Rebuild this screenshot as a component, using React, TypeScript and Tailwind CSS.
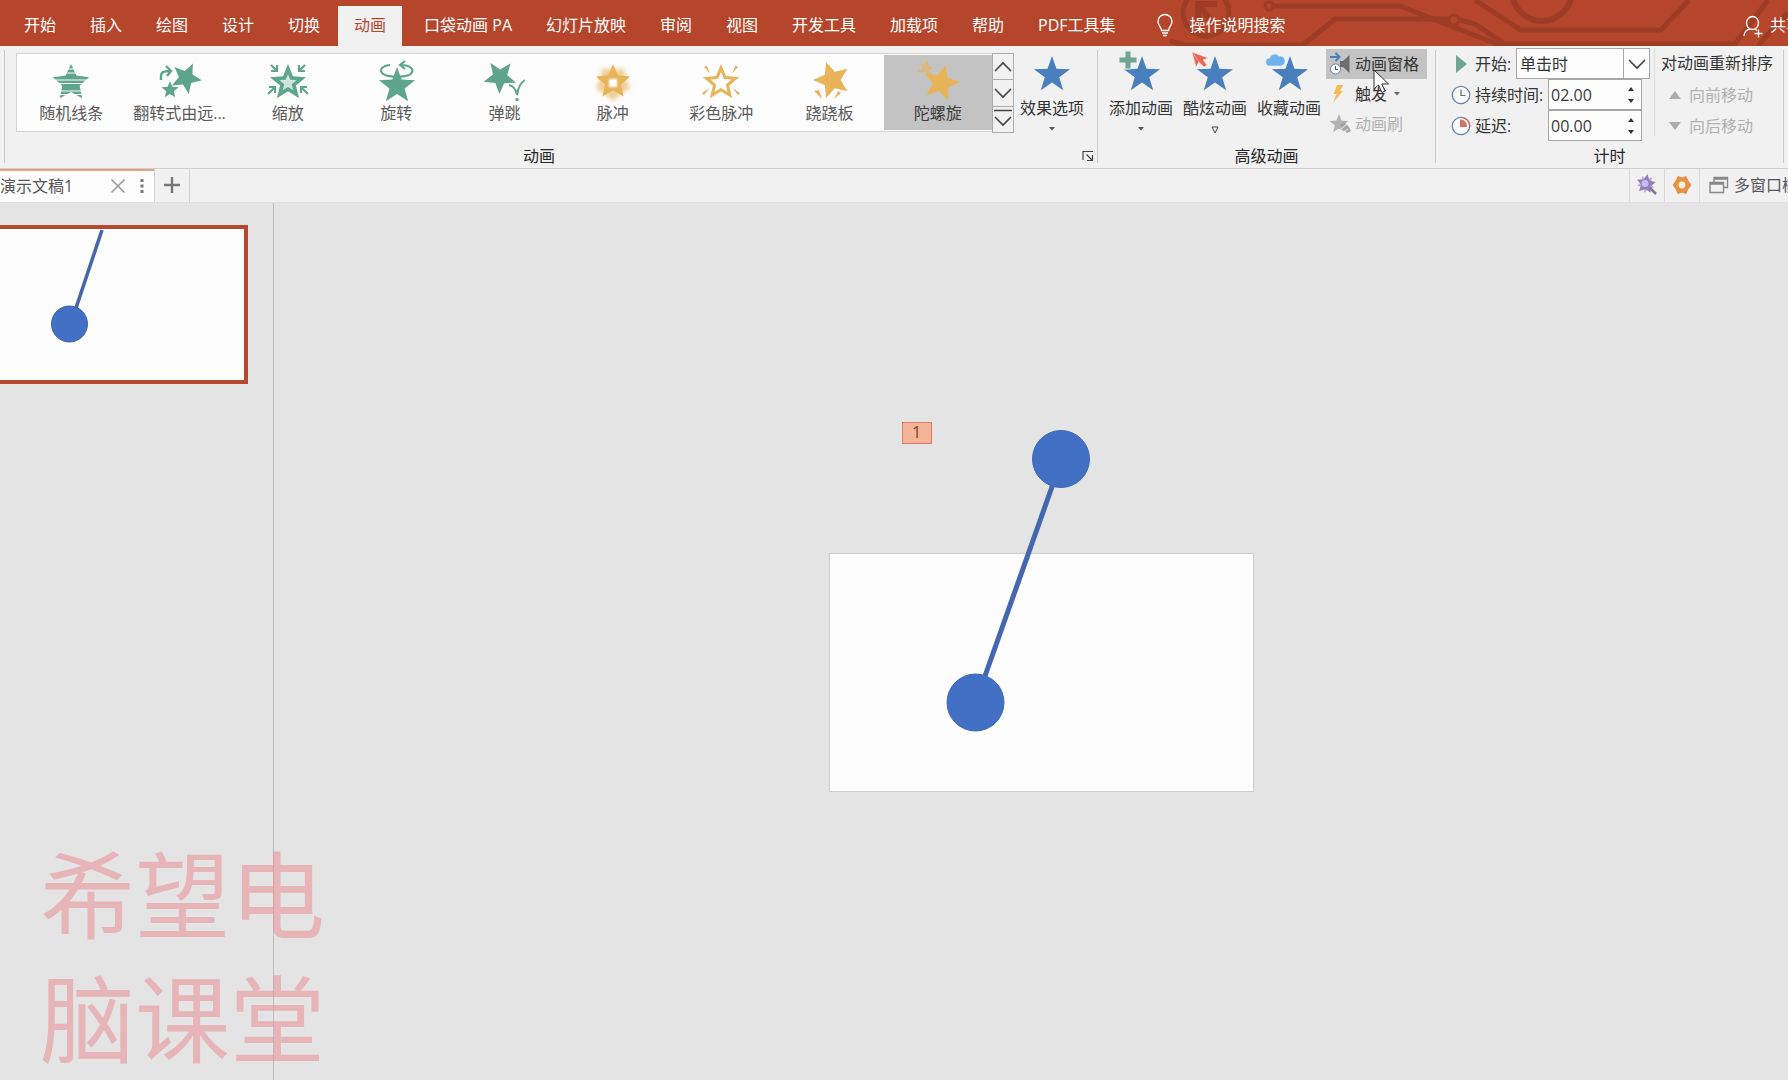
import type { ReactNode } from "react";

const GREEN = "#5fa58e";
const GOLD = "#e8b45a";
const BLUE = "#4a7fbd";

function starPoints(cx: number, cy: number, r: number, rot = 0, ratio = 0.4) {
  return Array.from({ length: 10 }, (_, i) => {
    const a = ((i * 36 + rot - 90) * Math.PI) / 180;
    const d = i % 2 === 0 ? r : r * ratio;
    return `${(cx + d * Math.cos(a)).toFixed(2)},${(cy + d * Math.sin(a)).toFixed(2)}`;
  }).join(" ");
}

function Star({ cx, cy, r, rot, ratio, fill, opacity }: { cx: number; cy: number; r: number; rot?: number; ratio?: number; fill: string; opacity?: number }) {
  return <polygon points={starPoints(cx, cy, r, rot, ratio)} fill={fill} opacity={opacity} />;
}

function Icon48({ children }: { children: ReactNode }) {
  return (
    <svg viewBox="0 0 48 44" className="h-11 w-12 shrink-0 overflow-visible" aria-hidden="true">
      {children}
    </svg>
  );
}

const effects: { name: string; icon: ReactNode; selected?: boolean }[] = [
  {
    name: "随机线条",
    icon: (
      <Icon48>
        <Star cx={24} cy={24} r={19} ratio={0.48} fill={GREEN} />
        <path d="M16 10H32M14 14H34M4 21H44M4 24.500H44M10 32H38M8 35.500H40" stroke="#fdfdfd" strokeWidth="1" />
      </Icon48>
    ),
  },
  {
    name: "翻转式由远...",
    icon: (
      <Icon48>
        <Star cx={31} cy={19} r={16} rot={26} ratio={0.45} fill={GREEN} />
        <Star cx={15} cy={31} r={10} fill="#fdfdfd" />
        <Star cx={15} cy={31} r={9} fill={GREEN} ratio={0.44} />
        <path d="M6 21V17C6 13 9 12 15 12M11 7L16 12L12 17" fill="none" stroke={GREEN} strokeWidth="2.4" />
      </Icon48>
    ),
  },
  {
    name: "缩放",
    icon: (
      <Icon48>
        <Star cx={24} cy={24} r={19} ratio={0.44} fill={GREEN} />
        <Star cx={24} cy={24} r={9} ratio={0.44} fill="#cfe5dd" />
        <path
          d="M7 6L13 12M13 6V12H7M41 6L35 12M35 6V12H41M4 35L11 28M5 28H11V34M44 35L37 28M43 28H37V34"
          fill="none"
          stroke={GREEN}
          strokeWidth="2.2"
        />
      </Icon48>
    ),
  },
  {
    name: "旋转",
    icon: (
      <Icon48>
        <path d="M18 6C9 7 6 12 12 15.500M38 15.500C44 11 38 6 29 6M33 2L28 6L33 10" fill="none" stroke={GREEN} strokeWidth="2.2" />
        <Star cx={25} cy={27} r={19} ratio={0.42} fill={GREEN} />
        <path d="M12 15.500C18 18.500 32 18.500 38 15.500" fill="none" stroke={GREEN} strokeWidth="2.2" />
      </Icon48>
    ),
  },
  {
    name: "弹跳",
    icon: (
      <Icon48>
        <Star cx={20} cy={18} r={17} rot={38} ratio={0.44} fill={GREEN} />
        <path d="M29 26C34 27 36 31 37 36C38 29 40 24 45 21" fill="none" stroke="#fdfdfd" strokeWidth="4" />
        <path d="M29 26C34 27 36 31 37 36C38 29 40 24 45 21" fill="none" stroke={GREEN} strokeWidth="2" />
        <circle cx="37" cy="40.500" r="1.700" fill={GREEN} />
      </Icon48>
    ),
  },
  {
    name: "脉冲",
    icon: (
      <Icon48>
        <defs>
          <filter id="pulse-glow" x="-30%" y="-30%" width="160%" height="160%">
            <feGaussianBlur stdDeviation="2" />
          </filter>
          <filter id="pulse-core" x="-60%" y="-60%" width="220%" height="220%">
            <feGaussianBlur stdDeviation="1" />
          </filter>
        </defs>
        <g filter="url(#pulse-glow)">
          <Star cx={24} cy={24} r={18} rot={36} ratio={0.75} fill={GOLD} opacity={0.65} />
        </g>
        <Star cx={24} cy={23} r={18} ratio={0.46} fill={GOLD} />
        <rect x="20" y="20" width="8" height="8" fill="#ffffff" filter="url(#pulse-core)" />
        <rect x="21" y="21" width="6" height="6" fill="#ffffff" />
      </Icon48>
    ),
  },
  {
    name: "彩色脉冲",
    icon: (
      <Icon48>
        <Star cx={24} cy={24} r={19} ratio={0.45} fill={GOLD} />
        <Star cx={24} cy={24} r={11} ratio={0.46} fill="#fdfdfd" />
        <path d="M7 8L9.500 6.500L13 14.500ZM41 8L38.500 6.500L35 14.500ZM5 34L7 36L12.500 29ZM43 34L41 36L35.500 29Z" fill={GOLD} />
      </Icon48>
    ),
  },
  {
    name: "跷跷板",
    icon: (
      <Icon48>
        <Star cx={27} cy={21} r={19} rot={-18} ratio={0.46} fill={GOLD} />
        <path d="M9 32L17 40L14 31ZM29 40L33 32L36 34Z" fill={GOLD} />
      </Icon48>
    ),
  },
  {
    name: "陀螺旋",
    selected: true,
    icon: (
      <Icon48>
        <Star cx={27} cy={24} r={19} rot={14} ratio={0.44} fill={GOLD} />
        <Star cx={12} cy={9} r={7} rot={14} ratio={0.5} fill={GOLD} opacity={0.6} />
        <path d="M11 2L14 6M18 8L15 10M4 13L8 11M15 13L17 17" stroke={GOLD} strokeWidth="2.4" opacity="0.7" />
      </Icon48>
    ),
  },
];

const tabs = ["开始", "插入", "绘图", "设计", "切换", "动画", "口袋动画 PA", "幻灯片放映", "审阅", "视图", "开发工具", "加载项", "帮助", "PDF工具集"];

function Chevron({ up, bar }: { up?: boolean; bar?: boolean }) {
  return (
    <svg viewBox="0 0 20 22" className="h-[22px] w-5" aria-hidden="true">
      {bar && <path d="M1 2.500H19" stroke="#444" strokeWidth="1.500" />}
      <path d={up ? "M2 15L10 7L18 15" : bar ? "M2 9L10 17L18 9" : "M2 7L10 15L18 7"} fill="none" stroke="#444" strokeWidth="1.600" />
    </svg>
  );
}

function Separator() {
  return <div className="mt-1 mb-[5px] w-px shrink-0 bg-[#cbcbcb]" />;
}

function GroupLabel({ children }: { children: ReactNode }) {
  return <div className="pb-[2px] text-center leading-5 text-[#262626]">{children}</div>;
}

function BigButton({ label, icon, arrow }: { label: string; icon: ReactNode; arrow?: "solid" | "open" }) {
  return (
    <button type="button" className="flex w-[74px] flex-col items-center text-[#333]">
      <svg viewBox="0 0 48 47" className="h-[47px] w-12 shrink-0 overflow-visible" aria-hidden="true">
        {icon}
      </svg>
      <span className="leading-5 whitespace-nowrap">{label}</span>
      {arrow === "solid" && (
        <svg viewBox="0 0 8 6" className="mt-2 h-[6px] w-2" aria-hidden="true">
          <path d="M1 1H7L4 4.500Z" fill="#555" />
        </svg>
      )}
      {arrow === "open" && (
        <svg viewBox="0 0 8 8" className="mt-2 h-2 w-2" aria-hidden="true">
          <path d="M1 1H7L4 7Z" fill="none" stroke="#444" />
        </svg>
      )}
    </button>
  );
}

function Clock({ pie }: { pie?: boolean }) {
  return (
    <svg viewBox="0 0 20 20" className="h-5 w-5 shrink-0" aria-hidden="true">
      <circle cx="10" cy="10" r="8.700" fill="#fdfdfd" stroke="#5f84b4" strokeWidth="1.300" />
      {pie ? (
        <>
          <path d="M10 1.300A8.700 8.700 0 0 1 18.700 10" fill="none" stroke="#d5695a" strokeWidth="1.300" />
          <path d="M9 3.500H10A6.500 6.500 0 0 1 16 11H9Z" fill="#d9705f" />
        </>
      ) : (
        <path d="M10 4.500V10.500H14.500" fill="none" stroke="#666" strokeWidth="1.200" />
      )}
    </svg>
  );
}

function Spin({ id, label, value, pie }: { id: string; label: string; value: string; pie?: boolean }) {
  return (
    <div className="flex h-[31px] items-center">
      <Clock pie={pie} />
      <label htmlFor={id} className="ml-1 w-[73px] whitespace-nowrap">
        {label}
      </label>
      <div className="flex h-[31px] w-[94px] items-center border border-[#a6a6a6] bg-[#fdfdfd]">
        <input id={id} defaultValue={value} className="h-full w-0 grow bg-transparent pl-[2px] text-[#3a3a3a] outline-none" />
        <div className="flex w-5 flex-col items-center gap-[6px]">
          <button type="button" aria-label={label + " 增加"}>
            <svg viewBox="0 0 8 6" className="h-[6px] w-2">
              <path d="M1 5H7L4 1Z" fill="#333" />
            </svg>
          </button>
          <button type="button" aria-label={label + " 减少"}>
            <svg viewBox="0 0 8 6" className="h-[6px] w-2">
              <path d="M1 1H7L4 5Z" fill="#333" />
            </svg>
          </button>
        </div>
      </div>
    </div>
  );
}

function TitleBar() {
  return (
    <header className="relative flex h-[46px] shrink-0 items-end overflow-hidden bg-[#b5462c] text-white">
      <svg viewBox="0 0 618 46" className="absolute top-0 right-0 h-[46px] w-[618px]" aria-hidden="true">
        <g fill="none" stroke="#993c26" strokeWidth="5" opacity="0.85">
          <circle cx="36" cy="13" r="23" />
          <path d="M47 4H28V26M28 4L44 24" strokeWidth="6" />
          <circle cx="99" cy="6" r="4" strokeWidth="3" />
          <path d="M104 6H230L332 46" />
          <path d="M0 41L14 45H133L165 19H278" />
          <circle cx="284" cy="20" r="5" strokeWidth="3" />
          <path d="M290 20L305 24L335 44H565L598 0" />
          <path d="M305 0L351 30H491L519 0" />
          <circle cx="372" cy="-9" r="30" strokeWidth="6" />
          <path d="M588 46L618 12" />
        </g>
      </svg>
      <nav className="relative flex gap-[2px] pl-2">
        {tabs.map((t) => (
          <button
            key={t}
            type="button"
            className={
              t === "动画"
                ? "mr-1 h-10 bg-[#f1f1f1] px-4 pb-[2px] whitespace-nowrap text-[#b5462c]"
                : "h-10 px-4 pb-[2px] whitespace-nowrap"
            }
          >
            {t}
          </button>
        ))}
      </nav>
      <button type="button" className="relative ml-6 flex h-10 items-center gap-4 pb-[2px] whitespace-nowrap">
        <svg viewBox="0 0 18 24" className="h-6 w-[18px]" fill="none" stroke="#fff" strokeWidth="1.400" aria-hidden="true">
          <path d="M5.500 17.500C5.500 14 2 12.500 2 8.500A7 7 0 0 1 16 8.500C16 12.500 12.500 14 12.500 17.500ZM6 20H12M7 22.500H11" />
        </svg>
        操作说明搜索
      </button>
      <button type="button" className="relative ml-auto flex h-10 w-[46px] items-center gap-[6px] overflow-hidden pb-[2px] whitespace-nowrap">
        <svg viewBox="0 0 22 24" className="mt-1 h-6 w-[22px] shrink-0" fill="none" stroke="#fff" strokeWidth="1.300" aria-hidden="true">
          <ellipse cx="10.500" cy="8" rx="6" ry="6.500" />
          <path d="M2 21C2 17 5 14.500 8 14M13 14L15 15.500M16.500 14.500V22.500M12.500 18.500H20.500" />
        </svg>
        <span>共享</span>
      </button>
    </header>
  );
}

function AnimationGroup() {
  return (
    <section className="flex min-w-0 grow flex-col">
      <div className="relative flex h-[100px] pt-[7px] pl-[11px]">
        <div className="grid h-[79px] min-w-0 grow grid-cols-9 border border-r-0 border-[#d2d2d2] bg-[#fdfdfd] py-px">
          {effects.map((e) => (
            <button
              key={e.name}
              type="button"
              className={
                e.selected
                  ? "flex min-w-0 flex-col items-center bg-[#c3c3c3] pt-1 text-[#3c3c3c]"
                  : "flex min-w-0 flex-col items-center pt-1 text-[#5a5a5a]"
              }
            >
              {e.icon}
              <span className="leading-5 whitespace-nowrap">{e.name}</span>
            </button>
          ))}
        </div>
        <div className="flex h-[80px] w-[22px] shrink-0 flex-col divide-y divide-[#ababab] border border-[#ababab]">
          <button type="button" aria-label="上一行" className="flex grow items-center justify-center">
            <Chevron up />
          </button>
          <button type="button" aria-label="下一行" className="flex grow items-center justify-center">
            <Chevron />
          </button>
          <button type="button" aria-label="更多" className="flex grow items-center justify-center">
            <Chevron bar />
          </button>
        </div>
        <div className="-mt-[2px] flex w-[83px] shrink-0 pl-px">
          <BigButton label="效果选项" arrow="solid" icon={<Star cx={24} cy={24} r={19} fill={BLUE} />} />
        </div>
        <button type="button" aria-label="动画设置" className="absolute right-[3px] -bottom-4">
          <svg viewBox="0 0 12 12" className="h-3 w-3" fill="none" stroke="#444" strokeWidth="1.200">
            <path d="M1 10V1.500H11M4.500 4.500L10 10M10.500 5V10.500H5" />
          </svg>
        </button>
      </div>
      <div className="pr-6">
        <GroupLabel>动画</GroupLabel>
      </div>
    </section>
  );
}

function AdvancedGroup() {
  return (
    <section className="flex shrink-0 flex-col">
      <div className="flex h-[100px] pr-2 pl-[6px]">
        <div className="flex pt-[5px]">
          <BigButton
            label="添加动画"
            arrow="solid"
            icon={
              <>
                <Star cx={25} cy={24} r={19} fill={BLUE} />
                <path d="M8 0H14V6H20V12H14V18H8V12H2V6H8Z" fill="#6fa592" stroke="#f1f1f1" />
              </>
            }
          />
          <BigButton
            label="酷炫动画"
            arrow="open"
            icon={
              <>
                <Star cx={24} cy={24} r={19} fill={BLUE} />
                <path d="M1 1L17 7L12 9L16 14L13 16L8 11L5 16Z" fill="#ee6352" stroke="#f1f1f1" strokeWidth="0.500" />
                <path d="M1 1L8 11" stroke="#f6b0a6" />
              </>
            }
          />
          <BigButton
            label="收藏动画"
            icon={
              <>
                <Star cx={25} cy={24} r={19} fill={BLUE} />
                <path d="M5 15A4 4 0 0 1 4.500 7A5.500 5.500 0 0 1 14 5A5 5 0 0 1 16 15Z" fill="#6db3ea" stroke="#f1f1f1" strokeWidth="0.600" />
              </>
            }
          />
        </div>
        <div className="flex flex-col pt-[3px]">
          <button type="button" className="relative flex h-[30px] items-center gap-1 bg-[#c3c3c3] pr-2 pl-[3px] whitespace-nowrap text-[#333]">
            <svg viewBox="0 0 22 24" className="h-6 w-[22px]" aria-hidden="true">
              <path d="M1 5H10M6.500 1L10.500 5L6.500 9" fill="none" stroke="#4a7fbd" strokeWidth="2" />
              <circle cx="6.500" cy="17" r="5" fill="#fff" stroke="#5f84b4" />
              <path d="M6.500 14V17.500H9" fill="none" stroke="#555" />
              <path d="M11 9H14L20.500 3V21L14 15H11Z" fill="#6d6d6d" />
            </svg>
            动画窗格
            <svg viewBox="0 0 18 26" className="absolute top-5 left-[47px] z-10 h-[26px] w-[18px]" aria-hidden="true">
              <path d="M1 1V20L5.500 16L9 23.500L12 22L8.700 15H15.500Z" fill="#fff" stroke="#333" />
            </svg>
          </button>
          <button type="button" className="flex h-[30px] items-center gap-1 pl-[3px] text-[#333]">
            <svg viewBox="0 0 22 24" className="h-6 w-[22px]" aria-hidden="true">
              <path d="M8 3H14L11 9H14L4 21L7.500 12H4.500Z" fill="#f0bd58" />
            </svg>
            触发
            <svg viewBox="0 0 8 6" className="ml-[2px] h-[6px] w-2" aria-hidden="true">
              <path d="M1 1H7L4 4.500Z" fill="#666" />
            </svg>
          </button>
          <button type="button" disabled className="flex h-[30px] items-center gap-1 pl-[3px] text-[#b0b0b0]">
            <svg viewBox="0 0 22 24" className="h-6 w-[22px]" aria-hidden="true">
              <Star cx={10} cy={12} r={10} ratio={0.44} fill="#b3b3b3" />
              <path d="M11 13L15 10L20 15L22 19L18 21L14 17Z" fill="#a3a3a3" />
              <path d="M12 17L18 12M15 20L19 17" stroke="#f1f1f1" />
            </svg>
            动画刷
          </button>
        </div>
      </div>
      <GroupLabel>高级动画</GroupLabel>
    </section>
  );
}

function TimingGroup() {
  return (
    <section className="flex shrink-0 flex-col">
      <div className="flex h-[100px] items-start pt-[2px] pr-[10px] pl-[15px] text-[#333]">
        <div className="flex flex-col">
          <div className="flex h-[31px] items-center">
            <svg viewBox="0 0 20 20" className="h-5 w-5" aria-hidden="true">
              <path d="M5 1V19L16 10Z" fill="#6fa592" />
            </svg>
            <label htmlFor="start" className="ml-1 w-[41px] whitespace-nowrap">
              开始:
            </label>
            <div className="relative h-[31px] w-[134px]">
              <select id="start" className="h-full w-full appearance-none border border-[#a6a6a6] bg-[#fdfdfd] pl-[3px] outline-none">
                <option>单击时</option>
              </select>
              <div className="pointer-events-none absolute inset-y-0 right-0 flex w-[27px] items-center justify-center border-l border-[#a6a6a6]">
                <Chevron />
              </div>
            </div>
          </div>
          <Spin id="duration" label="持续时间:" value="02.00" />
          <Spin id="delay" label="延迟:" value="00.00" pie />
        </div>
        <div className="ml-1 h-[88px] w-px self-start bg-[#dadada]" />
        <div className="ml-[6px] flex flex-col">
          <span className="h-[31px] leading-[31px] whitespace-nowrap">对动画重新排序</span>
          <button type="button" disabled className="flex h-[31px] items-center gap-2 pl-2 text-[#b0b0b0]">
            <svg viewBox="0 0 12 8" className="h-2 w-3" aria-hidden="true">
              <path d="M0 8H12L6 0Z" fill="#ababab" />
            </svg>
            向前移动
          </button>
          <button type="button" disabled className="flex h-[31px] items-center gap-2 pl-2 text-[#b0b0b0]">
            <svg viewBox="0 0 12 8" className="h-2 w-3" aria-hidden="true">
              <path d="M0 0H12L6 8Z" fill="#ababab" />
            </svg>
            向后移动
          </button>
        </div>
      </div>
      <GroupLabel>计时</GroupLabel>
    </section>
  );
}

function DocumentBar() {
  return (
    <div className="flex h-[34px] shrink-0 border-b border-[#e0e0e0] bg-[#f1f1f1] text-[#555]">
      <div className="flex w-[154px] items-center border-t-2 border-[#e5a283] bg-[#fdfdfd] pb-[2px]">
        <span className="grow leading-6 whitespace-nowrap">演示文稿1</span>
        <button type="button" aria-label="关闭">
          <svg viewBox="0 0 16 16" className="h-4 w-4" stroke="#999" strokeWidth="1.600">
            <path d="M1.500 1.500L14.500 14.500M14.500 1.500L1.500 14.500" />
          </svg>
        </button>
        <button type="button" aria-label="菜单" className="mr-[10px] ml-[14px]">
          <svg viewBox="0 0 4 16" className="h-4 w-1" fill="#777">
            <path d="M0.500 1H3.500V4H0.500ZM0.500 6.500H3.500V9.500H0.500ZM0.500 12H3.500V15H0.500Z" />
          </svg>
        </button>
      </div>
      <button type="button" aria-label="新建" className="flex w-9 items-center justify-center border-x border-[#d2d2d2] pb-[2px]">
        <svg viewBox="0 0 16 16" className="h-4 w-4" stroke="#777" strokeWidth="2.400">
          <path d="M8 0V16M0 8H16" />
        </svg>
      </button>
      <div className="ml-auto flex">
        <button type="button" aria-label="魔法棒" className="flex w-[35px] items-center justify-center border-l border-[#d8d8d8] pb-[2px]">
          <svg viewBox="0 0 22 22" className="h-[22px] w-[22px]">
            <path d="M13 13L20 20" stroke="#7d7596" strokeWidth="2.500" />
            <polygon points={starPoints(10, 10, 10, 8, 0.5)} fill="#8f80b8" />
            <polygon points={starPoints(10, 10, 9, 44, 0.5)} fill="#8f80b8" opacity="0.6" />
            <circle cx="9" cy="9.500" r="3.500" fill="#c9b8f2" />
          </svg>
        </button>
        <button type="button" aria-label="设置" className="flex w-[36px] items-center justify-center border-x border-[#d8d8d8] pb-[2px]">
          <svg viewBox="0 0 20 20" className="h-5 w-5">
            <path d="M6 1.500L10 3L14 1.500L16 6L19 10L16 14L14 18.500L10 17L6 18.500L4 14L1 10L4 6Z" fill="#e8913f" stroke="#e8913f" strokeLinejoin="round" />
            <circle cx="10" cy="10" r="3.400" fill="#f8efe6" />
          </svg>
        </button>
        <button type="button" className="flex w-[88px] items-center gap-[5px] overflow-hidden pb-[2px] pl-[9px] whitespace-nowrap">
          <svg viewBox="0 0 20 18" className="h-[18px] w-5 shrink-0" fill="#f1f1f1" stroke="#888" strokeWidth="1.400">
            <path d="M5 1.500H18.500V11.500H5ZM5 3H18.500" />
            <path d="M1 6.500H14.500V16.500H1ZM1 8H14.500" />
          </svg>
          多窗口模式
        </button>
      </div>
    </div>
  );
}

export default function App() {
  return (
    <div className="flex h-screen flex-col overflow-hidden bg-[#e4e4e4] font-['Open_Sans','Noto_Sans_CJK_SC',sans-serif] text-base">
      <TitleBar />
      <div className="flex shrink-0 border-b border-[#cfcfcf] bg-[#f1f1f1] pl-1">
        <Separator />
        <AnimationGroup />
        <Separator />
        <AdvancedGroup />
        <Separator />
        <TimingGroup />
        <Separator />
        <div className="w-1 shrink-0" />
      </div>
      <DocumentBar />
      <main className="relative flex grow">
        <aside className="flex w-[274px] shrink-0 flex-col border-r border-[#bdbdbd] pt-[22px]">
          <button type="button" aria-label="幻灯片 1" className="h-[159px] w-[248px] border-4 border-l-0 border-[#b5482f] bg-[#fdfdfd]">
            <svg viewBox="0 0 244 151" className="h-full w-full">
              <path d="M102 1L76 79" stroke="#4467a8" strokeWidth="3.500" />
              <circle cx="69.500" cy="95" r="18" fill="#4270c4" stroke="#3f66ad" />
            </svg>
          </button>
        </aside>
        <div className="flex grow items-center justify-center pt-[61px] pl-5">
          <div className="relative h-[239px] w-[425px] border border-[#cdcdcd] bg-[#fdfdfd]">
            <svg viewBox="0 0 425 239" className="absolute -top-px -left-px h-[239px] w-[425px] overflow-visible" aria-hidden="true">
              <path d="M224 -69L156 123" stroke="#4467b0" strokeWidth="5" />
              <circle cx="232" cy="-94" r="28.500" fill="#4270c4" stroke="#4068b4" />
              <circle cx="146.500" cy="149.500" r="28.500" fill="#4270c4" stroke="#4068b4" />
            </svg>
            <div className="absolute -top-[132px] left-[72px] flex h-[22px] w-[30px] items-center justify-center border border-[#dc7a66] bg-[#f4b397] pb-[2px] text-base text-[#6b4436]">
              1
            </div>
          </div>
        </div>
        <div className="pointer-events-none absolute -bottom-px left-10 w-72 text-[95px] leading-[124px] text-[#ea8c92]/55">
          希望电
          <br />
          脑课堂
        </div>
      </main>
    </div>
  );
}
